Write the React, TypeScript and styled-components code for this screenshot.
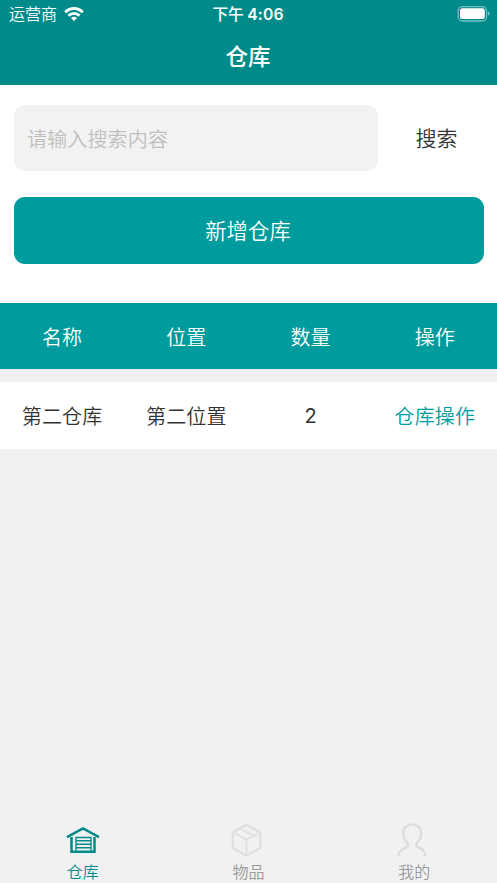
import React from "react";
import styled, { createGlobalStyle } from "styled-components";

const TEAL = "#009b9d";
const HEADER = "#008b8a";

const GlobalStyle = createGlobalStyle`
  * { box-sizing: border-box; }
  body {
    margin: 0;
    background: #f1f1f1;
    font-family: Inter, "Noto Sans CJK SC", sans-serif;
    font-weight: 350;
    color: #333;
  }
  button, input { font: inherit; color: inherit; border: 0; background: none; padding: 0; margin: 0; }
`;

const Screen = styled.div`
  display: flex;
  flex-direction: column;
  width: 497px;
  height: 883px;
  overflow: hidden;
  background: #f1f1f1;
`;

const Header = styled.header`
  height: 84.5px;
  flex: none;
  background: ${HEADER};
  color: #fff;
`;

const StatusBar = styled.div`
  display: grid;
  grid-template-columns: 1fr auto 1fr;
  align-items: center;
  height: 27px;
  padding: 0 7px 0 9px;
  font-size: 16px;
  line-height: 29px;
`;

const Carrier = styled.div`
  display: flex;
  align-items: center;
  gap: 6.5px;
  height: 27px;
  span { padding-top: 2px; }
`;

const Clock = styled.div`
  display: flex;
  gap: 3.5px;
  margin-left: -3px;
  font-size: 15.7px;
  font-weight: 500;
  height: 27px;
  b { font-weight: 600; letter-spacing: 0.1px; }
`;

const Battery = styled.svg`
  justify-self: end;
`;

const Title = styled.h1`
  margin: 0;
  height: 57px;
  padding-right: 1px;
  line-height: 59px;
  text-align: center;
  font-size: 22.5px;
  font-weight: 500;
`;

const Controls = styled.section`
  flex: none;
  height: 218.5px;
  padding: 20.5px 13.5px 0;
  background: #fff;
`;

const SearchRow = styled.div`
  display: flex;
  height: 66px;
`;

const SearchInput = styled.input`
  width: 364px;
  height: 66px;
  && { padding: 3px 13.5px 0; background: #f2f2f2; }
  border-radius: 11px;
  outline: 0;
  font-size: 20px;
  letter-spacing: 0.15px;
  &::placeholder { color: #bfbfbf; opacity: 1; }
`;

const SearchButton = styled.button`
  flex: 1;
  && { font-size: 21px; padding: 0 0 3px 12px; }
`;

const AddButton = styled.button`
  display: block;
  width: 100%;
  height: 66.3px;
  && { margin-top: 26.3px; padding: 0 1px 2px 0; background: ${TEAL}; color: #fff; font-size: 21.4px; }
  border-radius: 11px;
`;

const TableRow = styled.div<{ $head?: boolean }>`
  display: grid;
  grid-template-columns: repeat(4, 1fr);
  align-items: center;
  flex: none;
  height: 66.2px;
  padding-top: ${(p) => (p.$head ? "3px" : "2px")};
  margin-bottom: 13.3px;
  background: ${(p) => (p.$head ? TEAL : "#fff")};
  color: ${(p) => (p.$head ? "#fff" : "#333")};
`;

const Cell = styled.div<{ $link?: boolean; $number?: boolean }>`
  text-align: center;
  font-size: 20px;
  font-weight: ${(p) => (p.$number ? 400 : 350)};
  padding-bottom: ${(p) => (p.$number ? "2px" : 0)};
  letter-spacing: 0.15px;
  line-height: 30px;
  color: ${(p) => (p.$link ? TEAL : "inherit")};
`;

const TabBar = styled.nav`
  display: grid;
  grid-template-columns: repeat(3, 1fr);
  height: 65px;
  margin-top: auto;
  flex: none;
`;

const Tab = styled.div<{ $active?: boolean }>`
  display: flex;
  flex-direction: column;
  align-items: center;
  padding-top: 5px;
  font-size: 16px;
  line-height: 22px;
  color: ${(p) => (p.$active ? HEADER : "#999")};
  svg { display: block; margin-bottom: 2px; flex: none; }
`;

const WifiIcon = () => (
  <svg width="20" height="16" viewBox="0 0 20 16" fill="none" stroke="#fff" strokeWidth="2.9">
    <path d="M1.2 6.2C6.3 1.2 13.7 1.2 18.8 6.2" />
    <path d="M4.5 9.6C7.7 6.6 12.3 6.6 15.5 9.6" />
    <path d="M7 12c1.7-1.6 4.3-1.6 6 0l-3 3Z" fill="#fff" stroke="none" />
  </svg>
);

const BatteryIcon = () => (
  <Battery width="33" height="16" viewBox="0 0 33 16">
    <rect x="1.2" y="0.7" width="28.4" height="14.3" rx="4.2" fill="none" stroke="#fff" strokeOpacity=".45" strokeWidth="1.3" />
    <rect x="3" y="2.2" width="24.8" height="10.7" rx="2.5" fill="#fff" />
    <path d="M31 5.3q1.6.7 1.6 2.2T31 9.8Z" fill="#fff" fillOpacity=".5" />
  </Battery>
);

const WarehouseIcon = () => (
  <svg width="36" height="36" viewBox="0 0 36 36" fill="none" stroke={HEADER}>
    <path d="M2 14.2 18 5.5l16 8.700" strokeWidth="2.5" />
    <path d="M6.5 14v14.700h23V14" strokeWidth="2.5" />
    <path d="M11 28V14.500h15V28M11 17.800h15M11 21.300h15M11 24.800h15" strokeWidth="1.4" />
  </svg>
);

const BoxIcon = () => (
  <svg width="36" height="36" viewBox="0 0 36 36" fill="none" stroke="#dfdfdf" strokeLinejoin="round" strokeWidth="2.2">
    <path d="M16.500 1.800 30.3 9.200v15.800L16.500 32.600 2.700 25V9.200Z" />
    <path d="m3.500 9.800 13 6.700 13-6.700M16.500 16.500v15.500M9.800 5.500l13.400 7" strokeWidth="1.7" />
  </svg>
);

const UserIcon = () => (
  <svg width="36" height="36" viewBox="0 0 36 36" fill="none" stroke="#dcdcdc" strokeWidth="2.2" strokeLinecap="round">
    <path d="M2.500 32.500c0-4.400 3.700-6.800 8-8.500 1.800-.7 2-2.200 1-3.700-3-3.600-4.300-6-4.300-9.900 0-5.500 3.900-9 9-9s9 3.500 9 9c0 3.900-1.300 6.300-4.300 9.900-1 1.500-.8 3 1 3.700 4.300 1.700 7.300 4.100 7.300 8.500" />
  </svg>
);

export default function App() {
  return (
    <>
      <GlobalStyle />
      <Screen>
        <Header>
          <StatusBar>
            <Carrier><span>运营商</span><WifiIcon /></Carrier>
            <Clock><span>下午</span><b>4:06</b></Clock>
            <BatteryIcon />
          </StatusBar>
          <Title>仓库</Title>
        </Header>
        <Controls>
          <SearchRow>
            <SearchInput placeholder="请输入搜索内容" />
            <SearchButton>搜索</SearchButton>
          </SearchRow>
          <AddButton>新增仓库</AddButton>
        </Controls>
        <TableRow $head>
          {["名称", "位置", "数量", "操作"].map((label) => <Cell key={label}>{label}</Cell>)}
        </TableRow>
        <TableRow>
          <Cell>第二仓库</Cell>
          <Cell>第二位置</Cell>
          <Cell $number>2</Cell>
          <Cell $link>仓库操作</Cell>
        </TableRow>
        <TabBar>
          <Tab $active><WarehouseIcon />仓库</Tab>
          <Tab><BoxIcon />物品</Tab>
          <Tab><UserIcon />我的</Tab>
        </TabBar>
      </Screen>
    </>
  );
}
